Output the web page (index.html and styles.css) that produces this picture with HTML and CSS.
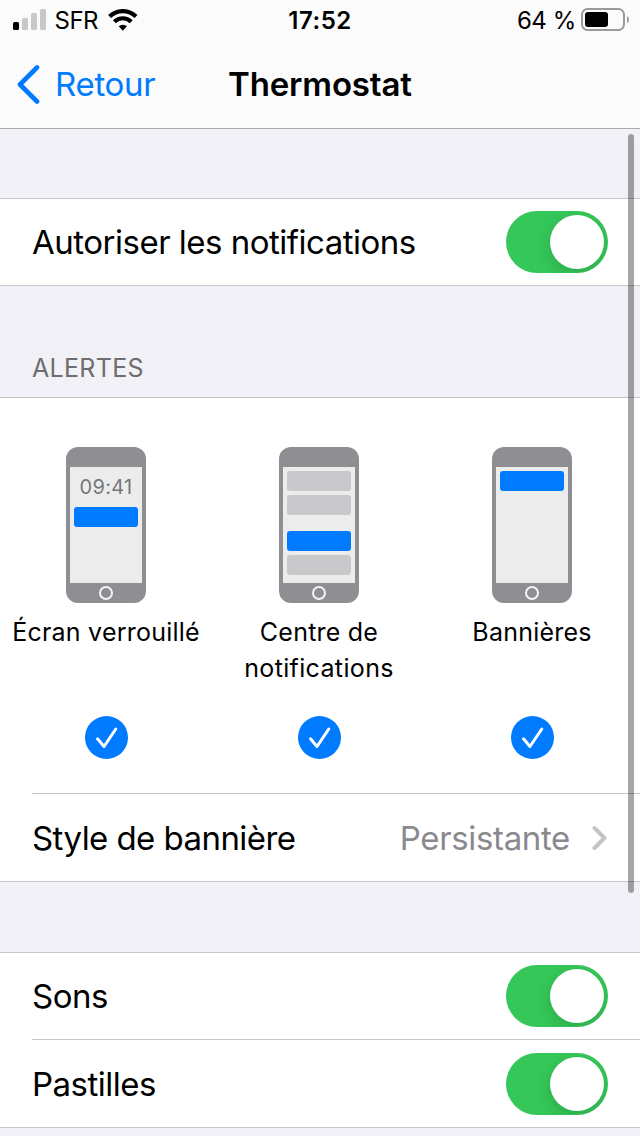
FILE: index.html
```html
<!DOCTYPE html>
<html lang="fr">
<head>
<meta charset="utf-8">
<title>Thermostat</title>
<link rel="stylesheet" href="styles.css">
</head>
<body>
<div class="app">
  <header class="top">
    <div class="status">
      <div class="carrier">
        <svg class="signal" width="34" height="22" viewBox="0 0 34 22"><rect x="0" y="13" width="6" height="8" rx="1.5" fill="#000"/><g fill="#c8c8c8"><rect x="9" y="9" width="6" height="12" rx="1.5"/><rect x="18" y="4" width="6" height="17" rx="1.5"/><rect x="27" y="0" width="6" height="21" rx="1.5"/></g></svg>
        <span class="operator">SFR</span>
        <svg class="wifi" width="30" height="22" viewBox="0 0 30 22"><g fill="none" stroke="#000" stroke-width="4.200"><path d="M1.6 7.5a18.8 18.8 0 0 1 26.4 0"/><path d="M6.4 12.7a12 12 0 0 1 16.8 0"/></g><path d="M10.7 17.3a6.2 6.2 0 0 1 8.2 0L14.8 21.7z"/></svg>
      </div>
      <span class="time">17:52</span>
      <div class="power">
        <span class="percent">64 %</span>
        <svg width="48" height="24" viewBox="0 0 48 24"><rect x="1" y="1" width="42" height="21" rx="5.5" fill="none" stroke="#9a9a9a" stroke-width="2"/><rect x="4" y="4" width="23" height="15" rx="3" fill="#000"/><path d="M46 8q2 1 2 3.500t-2 3.500z" fill="#9a9a9a"/></svg>
      </div>
    </div>
    <nav class="nav">
      <a class="back"><svg width="24" height="40" viewBox="0 0 24 40"><path d="M20 3.500L3 20.500L20 37.500" fill="none" stroke="#007aff" stroke-width="4.600" stroke-linecap="round" stroke-linejoin="round"/></svg><span class="back-label">Retour</span></a>
      <h1 class="title">Thermostat</h1>
    </nav>
  </header>
  <main>
    <section class="group first">
      <div class="row"><span class="label allow">Autoriser les notifications</span><span class="toggle"><i class="knob"></i></span></div>
    </section>
    <h2 class="heading"><span>ALERTES</span></h2>
    <section class="group alerts">
      <div class="styles">
        <div class="option">
          <div class="phone"><div class="screen"><span class="clock">09:41</span><i class="bar blue"></i></div><i class="home"></i></div>
          <p class="caption lock">Écran verrouillé</p>
          <svg class="check" width="43" height="43" viewBox="0 0 43 43"><circle cx="21.500" cy="21.500" r="21.500" fill="#007aff"/><path d="M12.500 22.800L19 30.500L30.800 13" fill="none" stroke="#fff" stroke-width="3" stroke-linecap="round" stroke-linejoin="round"/></svg>
        </div>
        <div class="option">
          <div class="phone"><div class="screen"><i class="bar"></i><i class="bar"></i><i class="bar blue spaced"></i><i class="bar"></i></div><i class="home"></i></div>
          <p class="caption"><span class="centre">Centre de</span><br><span class="notif">notifications</span></p>
          <svg class="check" width="43" height="43" viewBox="0 0 43 43"><circle cx="21.500" cy="21.500" r="21.500" fill="#007aff"/><path d="M12.500 22.800L19 30.500L30.800 13" fill="none" stroke="#fff" stroke-width="3" stroke-linecap="round" stroke-linejoin="round"/></svg>
        </div>
        <div class="option">
          <div class="phone"><div class="screen"><i class="bar blue"></i></div><i class="home"></i></div>
          <p class="caption banners">Bannières</p>
          <svg class="check" width="43" height="43" viewBox="0 0 43 43"><circle cx="21.500" cy="21.500" r="21.500" fill="#007aff"/><path d="M12.500 22.800L19 30.500L30.800 13" fill="none" stroke="#fff" stroke-width="3" stroke-linecap="round" stroke-linejoin="round"/></svg>
        </div>
      </div>
      <div class="row divided"><span class="label banner-style">Style de bannière</span><span class="value">Persistante</span><svg class="chevron" width="16" height="26" viewBox="0 0 16 26"><path d="M2.500 3L12.500 13L2.500 23" fill="none" stroke="#c4c4c7" stroke-width="4" stroke-linecap="round" stroke-linejoin="round"/></svg></div>
    </section>
    <section class="group sounds">
      <div class="row"><span class="label sons">Sons</span><span class="toggle"><i class="knob"></i></span></div>
      <div class="row divided"><span class="label badges">Pastilles</span><span class="toggle"><i class="knob"></i></span></div>
    </section>
  </main>
  <i class="scrollbar"></i>
</div>
</body>
</html>
```
FILE: styles.css
```css
* { box-sizing: border-box; }
body { margin: 0; font-family: Inter, "Liberation Sans", sans-serif; color: #000; }
.app { position: relative; width: 640px; height: 1136px; overflow: hidden; background: #f2f1f7; }
svg { display: block; flex: none; }
i { display: block; }
.top { height: 129px; background: #fbfbfc; border-bottom: 1px solid #a9a9ae; }
.status { display: grid; grid-template-columns: 1fr auto 1fr; height: 40px; font-size: 24px; line-height: 42px; }
.carrier { display: flex; padding-left: 13px; }
.signal { margin-top: 9px; }
.operator { width: 52px; margin-left: 7.500px; letter-spacing: -0.500px; }
.wifi { margin: 9px 0 0 1px; }
.time { font-weight: 600; letter-spacing: 0.500px; }
.power { display: flex; justify-content: flex-end; padding-right: 11px; }
.percent { letter-spacing: -0.400px; }
.power svg { margin: 8px 0 0 5px; }
.nav { display: grid; grid-template-columns: 228px 1fr; height: 88px; line-height: 88px; }
.back { display: flex; align-items: center; padding-left: 17px; color: #007aff; font-size: 33px; }
.back-label { margin-left: 14px; letter-spacing: -0.300px; }
.title { margin: 0; font-size: 33px; font-weight: 600; letter-spacing: -0.150px; }
.group { background: #fff; border-top: 1px solid #c6c6c9; border-bottom: 1px solid #c6c6c9; }
.first { margin-top: 69px; }
.row { display: flex; align-items: center; height: 86px; padding-right: 32px; margin-left: 32px; font-size: 33px; }
.divided { height: 88px; border-top: 1px solid #c6c6c9; }
.label { flex: 1; white-space: nowrap; letter-spacing: -0.500px; }
.banner-style { letter-spacing: -0.560px; }
.toggle { display: flex; justify-content: flex-end; width: 102px; height: 62px; padding: 4px; border-radius: 31px; background: #35c759; overflow: hidden; }
.knob { width: 54px; height: 54px; border-radius: 50%; background: #fff; box-shadow: 0 5px 16px rgba(0,0,0,.15); }
.heading { display: flex; align-items: flex-end; height: 111px; margin: 0; padding: 0 0 13px 32px; font-size: 25px; line-height: 32px; font-weight: 400; color: #6d6d72; letter-spacing: 0.300px; }
.styles { display: grid; grid-template-columns: repeat(3, 213px); height: 395px; padding-top: 49px; }
.option { display: flex; flex-direction: column; align-items: center; padding-right: 1px; }
.phone { display: flex; flex-direction: column; align-items: center; width: 80px; height: 156px; padding-top: 20px; border-radius: 12px; background: #8e8e93; }
.screen { display: flex; flex-direction: column; align-items: center; gap: 4px; width: 72px; height: 116px; padding-top: 4px; background: #ececec; }
.bar { width: 64px; height: 20px; border-radius: 3px; background: #c9c9cb; }
.blue { background: #007aff; }
.spaced { margin-top: 12px; }
.clock { height: 32px; font-size: 20px; line-height: 32px; color: #77777b; letter-spacing: 0.300px; }
.home { width: 14px; height: 14px; margin-top: 3px; border: 2px solid #f4f4f4; border-radius: 50%; }
.caption { width: 212px; height: 72px; margin: 11px 0 30px; text-align: center; font-size: 25px; line-height: 36px; letter-spacing: 0.220px; }
.notif { letter-spacing: 0.350px; }
.check { margin-left: 1px; }
.value { color: #8a8a8e; margin-right: 22px; letter-spacing: -0.350px; }
.sounds { margin-top: 70px; }
.scrollbar { position: absolute; top: 134px; left: 628px; width: 6px; height: 759px; border-radius: 3px; background: rgba(0,0,0,.35); }
```
